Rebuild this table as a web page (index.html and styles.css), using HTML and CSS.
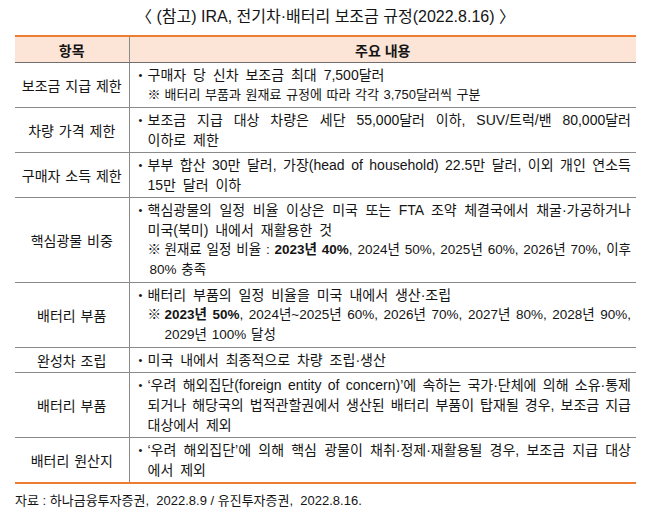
FILE: index.html
```html
<!DOCTYPE html>
<html lang="ko">
<head>
<meta charset="utf-8">
<link rel="stylesheet" href="styles.css">
</head>
<body>
<div class="page">
  <div class="title">〈 (참고) IRA, 전기차·배터리 보조금 규정(2022.8.16) 〉</div>
  <table class="tbl">
    <colgroup><col class="c1"><col class="c2"></colgroup>
    <thead>
      <tr><th class="lab">항목</th><th class="hc">주요 내용</th></tr>
    </thead>
    <tbody>
      <tr>
        <td class="lab">보조금 지급 제한</td>
        <td class="c">
          <div class="it"><span class="bl">•</span><div class="tx"><div class="ln">구매자 당 신차 보조금 최대 7,500달러</div></div></div>
          <div class="nt"><span class="nm">※</span><div class="tx"><div class="ln">배터리 부품과 원재료 규정에 따라 각각 3,750달러씩 구분</div></div></div>
        </td>
      </tr>
      <tr>
        <td class="lab">차량 가격 제한</td>
        <td class="c">
          <div class="it"><span class="bl">•</span><div class="tx"><div class="ln j">보조금 지급 대상 차량은 세단 55,000달러 이하, SUV/트럭/밴 80,000달러</div><div class="ln">이하로 제한</div></div></div>
        </td>
      </tr>
      <tr>
        <td class="lab">구매자 소득 제한</td>
        <td class="c">
          <div class="it"><span class="bl">•</span><div class="tx"><div class="ln j">부부 합산 30만 달러, 가장(head of household) 22.5만 달러, 이외 개인 연소득</div><div class="ln">15만 달러 이하</div></div></div>
        </td>
      </tr>
      <tr>
        <td class="lab">핵심광물 비중</td>
        <td class="c">
          <div class="it"><span class="bl">•</span><div class="tx"><div class="ln j">핵심광물의 일정 비율 이상은 미국 또는 FTA 조약 체결국에서 채굴·가공하거나</div><div class="ln">미국(북미) 내에서 재활용한 것</div></div></div>
          <div class="nt nt-l"><div class="tx"><div class="ln j"><span class="nm">※</span>원재료 일정 비율 : <b>2023년 40%</b>, 2024년 50%, 2025년 60%, 2026년 70%, 이후</div><div class="ln cont">80% 충족</div></div></div>
        </td>
      </tr>
      <tr>
        <td class="lab">배터리 부품</td>
        <td class="c">
          <div class="it"><span class="bl">•</span><div class="tx"><div class="ln">배터리 부품의 일정 비율을 미국 내에서 생산·조립</div></div></div>
          <div class="nt nt-l"><span class="nm">※</span><div class="tx"><div class="ln j"><b>2023년 50%</b>, 2024년~2025년 60%, 2026년 70%, 2027년 80%, 2028년 90%,</div><div class="ln">2029년 100% 달성</div></div></div>
        </td>
      </tr>
      <tr>
        <td class="lab">완성차 조립</td>
        <td class="c">
          <div class="it"><span class="bl">•</span><div class="tx"><div class="ln">미국 내에서 최종적으로 차량 조립·생산</div></div></div>
        </td>
      </tr>
      <tr>
        <td class="lab">배터리 부품</td>
        <td class="c">
          <div class="it"><span class="bl">•</span><div class="tx"><div class="ln j">‘우려 해외집단(foreign entity of concern)’에 속하는 국가·단체에 의해 소유·통제</div><div class="ln j">되거나 해당국의 법적관할권에서 생산된 배터리 부품이 탑재될 경우, 보조금 지급</div><div class="ln">대상에서 제외</div></div></div>
        </td>
      </tr>
      <tr>
        <td class="lab">배터리 원산지</td>
        <td class="c">
          <div class="it"><span class="bl">•</span><div class="tx"><div class="ln j">‘우려 해외집단’에 의해 핵심 광물이 채취·정제·재활용될 경우, 보조금 지급 대상</div><div class="ln">에서 제외</div></div></div>
        </td>
      </tr>
    </tbody>
  </table>
  <div class="src">자료 : 하나금융투자증권,&nbsp; 2022.8.9 / 유진투자증권,&nbsp; 2022.8.16.</div>
</div>
</body>
</html>
```

FILE: styles.css
```css
body {
  margin: 0;
  background: #ffffff;
  color: #141414;
  font-family: "Liberation Sans", "Noto Sans CJK KR", sans-serif;
}

.page {
  width: 621px;
  padding: 6px 15px 0 15px;
}

.title {
  text-align: center;
  font-size: 16px;
  line-height: 22px;
  margin-bottom: 7px;
}

.tbl {
  width: 621px;
  table-layout: fixed;
  border-collapse: collapse;
  border-top: 2px solid #ed7d31;
  border-bottom: 2px solid #ed7d31;
}

.c1 {
  width: 114px;
}

.tbl th {
  background: #fce4d6;
  font-weight: bold;
  font-size: 14px;
  height: 25px;
  padding: 0;
  border-bottom: 1px solid #6f6f6f;
}

.tbl th.hc,
.tbl td.c {
  border-left: 1px solid #8a8a8a;
}

.tbl td {
  border-top: 1px solid #8a8a8a;
}

.tbl td.lab,
.tbl th.lab {
  text-align: center;
  vertical-align: middle;
}

.tbl td.lab {
  font-size: 14px;
  word-spacing: 1px;
}

.tbl td.c {
  padding: 2px 5px 2px 9px;
  font-size: 14px;
  line-height: 20px;
}

.it,
.nt {
  display: flex;
}

.bl {
  flex: none;
  width: 9px;
  font-size: 11px;
}

.nt {
  padding-left: 9px;
  font-size: 13px;
}

.nt.nt-l {
  font-size: 13.5px;
}

.nm {
  flex: none;
  display: inline-block;
  width: 17px;
}

.tx {
  flex: 1;
  min-width: 0;
}

.ln {
  white-space: nowrap;
  word-spacing: 3px;
}

.nt .ln {
  word-spacing: 1px;
}

.ln.j {
  word-spacing: 0;
  text-align: justify;
  text-align-last: justify;
}

.cont {
  padding-left: 2px;
}

.src {
  font-size: 13px;
  line-height: 18px;
  margin-top: 8px;
}
```
